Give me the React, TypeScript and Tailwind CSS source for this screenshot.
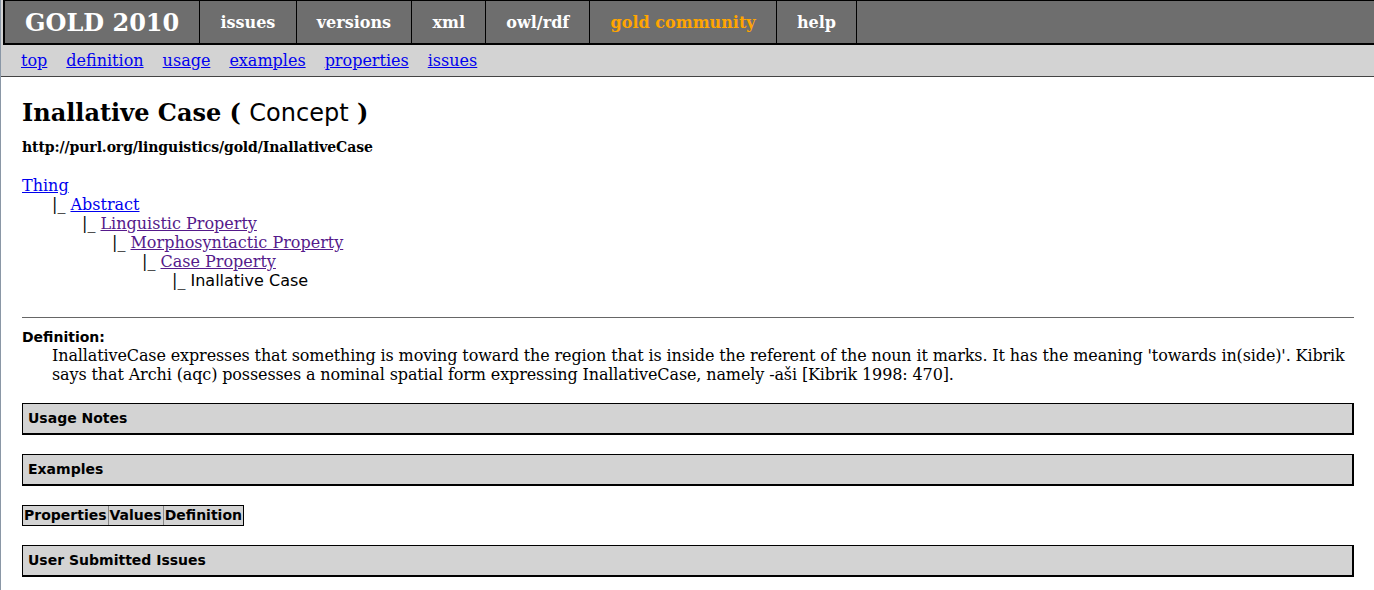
import React from "react";

const serif = { fontFamily: '"DejaVu Serif", serif' };
const sans = { fontFamily: '"DejaVu Sans", sans-serif' };

const navItems = [
  { label: "issues", color: "text-white" },
  { label: "versions", color: "text-white" },
  { label: "xml", color: "text-white" },
  { label: "owl/rdf", color: "text-white" },
  { label: "gold community", color: "text-[#ffa500]" },
  { label: "help", color: "text-white" },
];

const subNav = ["top", "definition", "usage", "examples", "properties", "issues"];

const tree: { label: string; level: number; kind: "link" | "visited" | "plain" }[] = [
  { label: "Thing", level: 0, kind: "link" },
  { label: "Abstract", level: 1, kind: "link" },
  { label: "Linguistic Property", level: 2, kind: "visited" },
  { label: "Morphosyntactic Property", level: 3, kind: "visited" },
  { label: "Case Property", level: 4, kind: "visited" },
  { label: "Inallative Case", level: 5, kind: "plain" },
];

function SectionBox({ title }: { title: string }) {
  return (
    <div
      className="mr-[20px] h-[32px] flex items-center border-t border-l border-r-2 border-b-2 border-black bg-[#d3d3d3] pl-[5px] text-[14px] font-bold text-black"
      style={sans}
    >
      {title}
    </div>
  );
}

export default function App() {
  return (
    <div className="min-h-[590px] bg-white border-l border-[#8a97a6] text-black" style={serif}>
      {/* Header */}
      <div className="bg-[#d3d3d3] pl-[2px]">
        <div className="flex h-[45px] border-t border-l-2 border-b-2 border-black bg-[#6e6e6e]">
          <div className="flex items-center border-r border-black px-[20px] pt-[2px] text-[24px] font-bold text-white">
            GOLD 2010
          </div>
          {navItems.map((n) => (
            <div
              key={n.label}
              className={`flex items-center border-r border-black px-[20.2px] pt-[1px] text-[16px] font-bold ${n.color}`}
            >
              {n.label}
            </div>
          ))}
        </div>
      </div>
      {/* Sub nav */}
      <div className="flex h-[32px] items-center gap-[19px] border-b border-[#444] bg-[#d3d3d3] pl-[20px] text-[16px]">
        {subNav.map((s) => (
          <a key={s} href="#" className="text-[#0000ee] underline">
            {s}
          </a>
        ))}
      </div>

      {/* Main */}
      <div className="pl-[21px]">
        <h1 className="mt-[22px] text-[24px] leading-[28px] font-bold" style={serif}>
          Inallative Case ({" "}
          <span className="font-normal" style={sans}>
            Concept
          </span>{" "}
          )
        </h1>
        <div className="mt-[10px] text-[14px] font-bold tracking-[-0.1px]">
          http://purl.org/linguistics/gold/InallativeCase
        </div>

        <div className="mt-[18px] text-[16px] leading-[19px]">
          {tree.map((t) => (
            <div key={t.label} style={{ paddingLeft: t.level * 30 }}>
              {t.level > 0 && <span className="text-black">|_ </span>}
              {t.kind === "link" && (
                <a href="#" className="text-[#0000ee] underline">
                  {t.label}
                </a>
              )}
              {t.kind === "visited" && (
                <a href="#" className="text-[#551a8b] underline">
                  {t.label}
                </a>
              )}
              {t.kind === "plain" && <span style={sans}>{t.label}</span>}
            </div>
          ))}
        </div>

        <div className="mr-[20px] mt-[27px] border-t border-[#666]" />

        <div className="mt-[11px] text-[14px] font-bold leading-[17px]" style={sans}>
          Definition:
        </div>
        <div className="mr-[20px] pl-[30px] text-[16px] leading-[19px] tracking-[-0.12px]">
          InallativeCase expresses that something is moving toward the region that is inside the referent of the noun it marks. It has the meaning 'towards in(side)'. Kibrik says that Archi (aqc) possesses a nominal spatial form expressing InallativeCase, namely -aši [Kibrik 1998: 470].
        </div>

        <div className="mt-[19px]">
          <SectionBox title="Usage Notes" />
        </div>
        <div className="mt-[19px]">
          <SectionBox title="Examples" />
        </div>

        <div className="mt-[19px] flex">
          <div
            className="flex border border-black bg-[#d3d3d3] text-[14px] font-bold leading-[19px]"
            style={sans}
          >
            <div className="border-r border-[#888] px-[1px]">Properties</div>
            <div className="border-r border-[#888] px-[1px]">Values</div>
            <div className="px-[1px]">Definition</div>
          </div>
        </div>

        <div className="mt-[19px]">
          <SectionBox title="User Submitted Issues" />
        </div>
      </div>
    </div>
  );
}
